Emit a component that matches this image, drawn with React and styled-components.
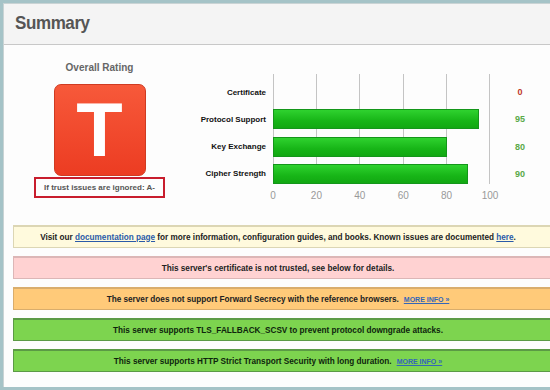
import React from 'react';
import styled, { createGlobalStyle } from 'styled-components';

const GlobalStyle = createGlobalStyle`
  html, body {
    margin: 0;
    padding: 0;
    background: #a5c3c7;
    overflow: hidden;
  }
  body {
    font-family: "Liberation Sans", Arial, sans-serif;
  }
`;

const Page = styled.div`
  width: 550px;
  height: 390px;
  padding: 3px 0 0 3px;
  box-sizing: border-box;
  overflow: hidden;
`;

const Panel = styled.div`
  width: 570px;
  height: 384px;
  background: #fdfdfd;
  border-left: 1px solid #c9d3d4;
  border-top: 1px solid #c9d3d4;
  box-sizing: border-box;
`;

const Header = styled.div`
  height: 41px;
  background: #f4f4f4;
  border-bottom: 1px solid #c8c8c8;
  display: flex;
  align-items: center;
  padding-left: 11px;
  box-sizing: border-box;
`;

const Title = styled.h1`
  margin: 0;
  font-size: 17px;
  font-weight: 700;
  color: #555;
  letter-spacing: -0.4px;
  transform: scaleY(1.08);
`;

const RatingSection = styled.div`
  display: flex;
  height: 180px;
`;

const RatingColumn = styled.div`
  width: 191px;
  display: flex;
  flex-direction: column;
  align-items: center;
  padding-top: 17px;
`;

const RatingTitle = styled.div`
  font-size: 10px;
  font-weight: 700;
  color: #666;
  margin-bottom: 11px;
`;

const GradeBox = styled.div`
  width: 92px;
  height: 92px;
  box-sizing: border-box;
  border-radius: 7px;
  border: 1px solid #cf3b22;
  background: linear-gradient(#f7593a, #ec3c22);
  display: flex;
  align-items: center;
  justify-content: center;
  color: #fff;
  font-size: 76px;
  font-weight: 700;
  line-height: 1;
`;

const TrustNote = styled.div`
  width: 131px;
  height: 21px;
  box-sizing: border-box;
  border: 2px solid #c81d2d;
  display: flex;
  align-items: center;
  justify-content: center;
  font-size: 8px;
  font-weight: 700;
  color: #555;
  margin-top: 1px;
`;

const Chart = styled.div`
  display: grid;
  grid-template-columns: 71px 217px 46px;
  column-gap: 7px;
  grid-template-rows: 110px 18px;
  padding-top: 29px;
`;

const Labels = styled.div`
  display: flex;
  flex-direction: column;
  align-items: flex-end;
  gap: 7.3px;
  padding-top: 8px;
`;

const Label = styled.div`
  height: 20px;
  display: flex;
  align-items: center;
  font-size: 8px;
  font-weight: 700;
  color: #111;
  white-space: nowrap;
`;

const Plot = styled.div`
  display: flex;
  flex-direction: column;
  gap: 7.3px;
  padding-top: 8px;
  background: repeating-linear-gradient(
    to right,
    #c4c4c4 0,
    #c4c4c4 1px,
    transparent 1px,
    transparent 43.2px
  );
`;

const BarTrack = styled.div`
  height: 20px;
  display: flex;
`;

const Bar = styled.div`
  height: 20px;
  box-sizing: border-box;
  border: 1px solid #14961a;
  background: linear-gradient(#2fd22f, #17b517 60%, #12a812);
`;

const Values = styled.div`
  display: flex;
  flex-direction: column;
  gap: 7.3px;
  padding-top: 8px;
`;

const Value = styled.div`
  height: 20px;
  display: flex;
  align-items: center;
  justify-content: center;
  font-size: 9px;
  font-weight: 700;
  color: ${p => (p.$zero ? '#c0392b' : '#5aaa48')};
`;

const Axis = styled.div`
  grid-column: 2;
  position: relative;
  font-size: 10px;
  color: #999;
`;

const Tick = styled.span`
  position: absolute;
  top: 6px;
  transform: translateX(-50%);
`;

const Notices = styled.div`
  display: flex;
  flex-direction: column;
  gap: 8px;
  padding-left: 9px;
`;

const colors = {
  info: ['#fffadd', '#dcd6b4', '#222'],
  error: ['#ffd2d2', '#dcb6b6', '#222'],
  warning: ['#ffca79', '#d9ad6c', '#222'],
  good: ['#7dd44f', '#5b9a45', '#0d250d'],
};

const Notice = styled.div`
  height: 23px;
  box-sizing: border-box;
  background: ${p => colors[p.$kind][0]};
  border: 1px solid ${p => colors[p.$kind][1]};
  border-top-width: 2px;
  color: ${p => colors[p.$kind][2]};
  display: flex;
  align-items: center;
  justify-content: center;
  padding-right: 30px;
  font-size: 8.2px;
  font-weight: 700;
  white-space: nowrap;
`;

const Link = styled.a`
  color: #2a5aa8;
  text-decoration: underline;
`;

const MoreInfo = styled.a`
  color: #3466b8;
  text-decoration: underline;
  font-size: 7px;
  margin-left: 5px;
`;

const scores = [
  { name: 'Certificate', value: 0 },
  { name: 'Protocol Support', value: 95 },
  { name: 'Key Exchange', value: 80 },
  { name: 'Cipher Strength', value: 90 },
];

export default function App() {
  return (
    <Page>
      <GlobalStyle />
      <Panel>
        <Header>
          <Title>Summary</Title>
        </Header>
        <RatingSection>
          <RatingColumn>
            <RatingTitle>Overall Rating</RatingTitle>
            <GradeBox>T</GradeBox>
            <TrustNote>If trust issues are ignored: A-</TrustNote>
          </RatingColumn>
          <Chart>
            <Labels>
              {scores.map(s => <Label key={s.name}>{s.name}</Label>)}
            </Labels>
            <Plot>
              {scores.map(s => (
                <BarTrack key={s.name}>
                  {s.value > 0 && <Bar style={{ width: `${s.value}%` }} />}
                </BarTrack>
              ))}
            </Plot>
            <Values>
              {scores.map(s => <Value key={s.name} $zero={s.value === 0}>{s.value}</Value>)}
            </Values>
            <Axis>
              {[0, 20, 40, 60, 80, 100].map(t => (
                <Tick key={t} style={{ left: `${t}%` }}>{t}</Tick>
              ))}
            </Axis>
          </Chart>
        </RatingSection>
        <Notices>
          <Notice $kind="info">
            Visit our&nbsp;<Link href="#">documentation page</Link>&nbsp;for more information, configuration guides, and books. Known issues are documented&nbsp;<Link href="#">here</Link>.
          </Notice>
          <Notice $kind="error">This server's certificate is not trusted, see below for details.</Notice>
          <Notice $kind="warning">
            The server does not support Forward Secrecy with the reference browsers.
            <MoreInfo href="#">MORE INFO »</MoreInfo>
          </Notice>
          <Notice $kind="good">This server supports TLS_FALLBACK_SCSV to prevent protocol downgrade attacks.</Notice>
          <Notice $kind="good">
            This server supports HTTP Strict Transport Security with long duration.
            <MoreInfo href="#">MORE INFO »</MoreInfo>
          </Notice>
        </Notices>
      </Panel>
    </Page>
  );
}
